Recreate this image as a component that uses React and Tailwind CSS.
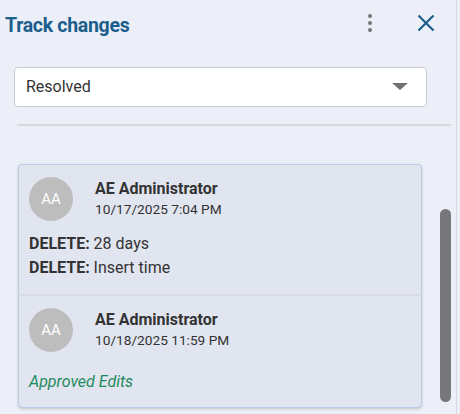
import React from "react";

const FONT = { fontFamily: "Roboto, 'Noto Sans', sans-serif" };

function Avatar() {
  return (
    <div className="flex h-[44px] w-[44px] shrink-0 items-center justify-center rounded-full bg-[#bdbdbd] text-[15px] text-white">
      AA
    </div>
  );
}

function Author({ date }) {
  return (
    <div className="flex items-start gap-[22px]">
      <Avatar />
      <div className="flex flex-col pt-[1px]">
        <span className="text-[16px] font-bold leading-[21px] text-[#333]">
          AE Administrator
        </span>
        <span className="text-[13.7px] leading-[20px] text-[#333]">{date}</span>
      </div>
    </div>
  );
}

export default function App() {
  return (
    <div className="flex h-[414px] w-[460px] overflow-hidden bg-[#eceff7]" style={FONT}>
      <div className="flex w-[457px] flex-col border-r border-[#d7dae2]">
        {/* Header */}
        <div className="flex h-[46px] items-center pl-[5px] pr-[20px]">
          <h1 className="mt-[6px] flex-1 text-[19.5px] font-bold tracking-[-0.3px] text-[#1b5e8c]">
            Track changes
          </h1>
          <div className="mr-[44px] flex h-[18px] w-[6px] flex-col items-center justify-between">
            <span className="h-[4px] w-[4px] rounded-full bg-[#757575]" />
            <span className="h-[4px] w-[4px] rounded-full bg-[#757575]" />
            <span className="h-[4px] w-[4px] rounded-full bg-[#757575]" />
          </div>
          <svg width="18" height="18" viewBox="0 0 18 18" className="mr-[1px]">
            <path d="M1.5 1.5 L16.5 16.5 M16.5 1.5 L1.5 16.5" stroke="#1b5e8c" strokeWidth="2.2" fill="none" />
          </svg>
        </div>

        {/* Filter */}
        <div className="mt-[21px] pl-[14px] pr-[29px]">
          <div className="flex h-[40px] items-center justify-between rounded-[4px] border border-[#c9ccd2] bg-white pl-[11px] pr-[18px]">
            <span className="text-[16px] text-[#333]">Resolved</span>
            <svg width="16" height="8" viewBox="0 0 16 8">
              <path d="M0 0 H16 L8 7 Z" fill="#707070" />
            </svg>
          </div>
        </div>

        <div className="ml-[17px] mr-[5px] mt-[17px] h-[2px] bg-[#d6d8dd]" />

        {/* List */}
        <div className="mt-[38px] flex flex-1 items-start gap-[18px] pl-[18px]">
          <div className="w-[404px] overflow-hidden rounded-[4px] border border-[#bccbe6] bg-[#e1e5f0] shadow-[0_1px_3px_rgba(0,0,0,0.18)]">
            <div className="px-[10px] pb-[14px] pt-[12px]">
              <Author date="10/17/2025 7:04 PM" />
              <div className="mt-[11px] text-[16px] leading-[24px] text-[#333]">
                <div>
                  <span className="font-bold">DELETE:</span> 28 days
                </div>
                <div>
                  <span className="font-bold">DELETE:</span> Insert time
                </div>
              </div>
            </div>
            <div className="h-[2px] bg-[#d9dbe0]" />
            <div className="px-[10px] pb-[13px] pt-[12px]">
              <Author date="10/18/2025 11:59 PM" />
              <div className="mt-[18px] text-[16px] italic leading-[24px] text-[#1e8a5e]">
                Approved Edits
              </div>
            </div>
          </div>
          <div className="mt-[45px] h-[193px] w-[11px] rounded-full bg-[#77777b]" />
        </div>
      </div>
    </div>
  );
}
